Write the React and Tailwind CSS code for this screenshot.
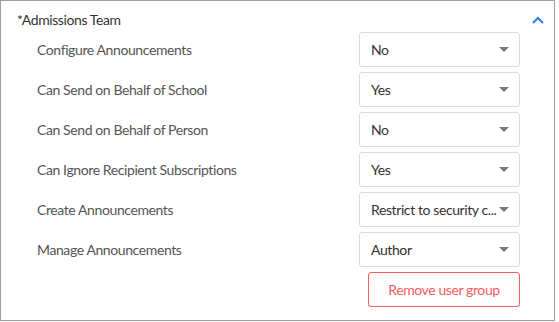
import React from "react";

const rows = [
  { label: "Configure Announcements", value: "No" },
  { label: "Can Send on Behalf of School", value: "Yes" },
  { label: "Can Send on Behalf of Person", value: "No" },
  { label: "Can Ignore Recipient Subscriptions", value: "Yes" },
  { label: "Create Announcements", value: "Restrict to security c..." },
  { label: "Manage Announcements", value: "Author" },
];

function Caret() {
  return (
    <svg width="10" height="5" viewBox="0 0 10 5" className="shrink-0">
      <path d="M0 0 L10 0 L5 5 Z" fill="#777" />
    </svg>
  );
}

function SelectBox({ value }) {
  return (
    <div className="w-[161px] h-[35px] border border-[#dcdcdc] rounded-[3px] bg-white flex items-center pl-[11px] pr-[10px] text-[14px] text-[#333]">
      <span className="flex-1 whitespace-nowrap overflow-hidden">{value}</span>
      <Caret />
    </div>
  );
}

export default function App() {
  return (
    <div className="w-[555px] h-[321px] border border-[#9e9e9e] bg-white font-['Lato',sans-serif] tracking-[-0.4px] pl-[16px] pr-[34px]">
      <div className="h-[31px] pt-[9px] flex items-start justify-between relative">
        <span className="text-[14px] leading-[20px] text-[#333]">*Admissions Team</span>
        <svg
          width="12"
          height="8"
          viewBox="0 0 12 8"
          className="absolute right-[-24px] top-[15px]"
        >
          <polyline points="1,7 6,2 11,7" fill="none" stroke="#2f7ff5" strokeWidth="2.2" />
        </svg>
      </div>
      <div className="flex flex-col gap-[5px]">
        {rows.map((r) => (
          <div key={r.label} className="flex items-center justify-between">
            <span className="pl-[20px] text-[14px] text-[#555]">{r.label}</span>
            <SelectBox value={r.value} />
          </div>
        ))}
        <div className="flex justify-end">
          <button className="w-[152px] h-[35px] border border-[#f25c5c] rounded-[3px] text-[14px] text-[#f25c5c] bg-white tracking-[-0.4px]">
            Remove user group
          </button>
        </div>
      </div>
    </div>
  );
}
